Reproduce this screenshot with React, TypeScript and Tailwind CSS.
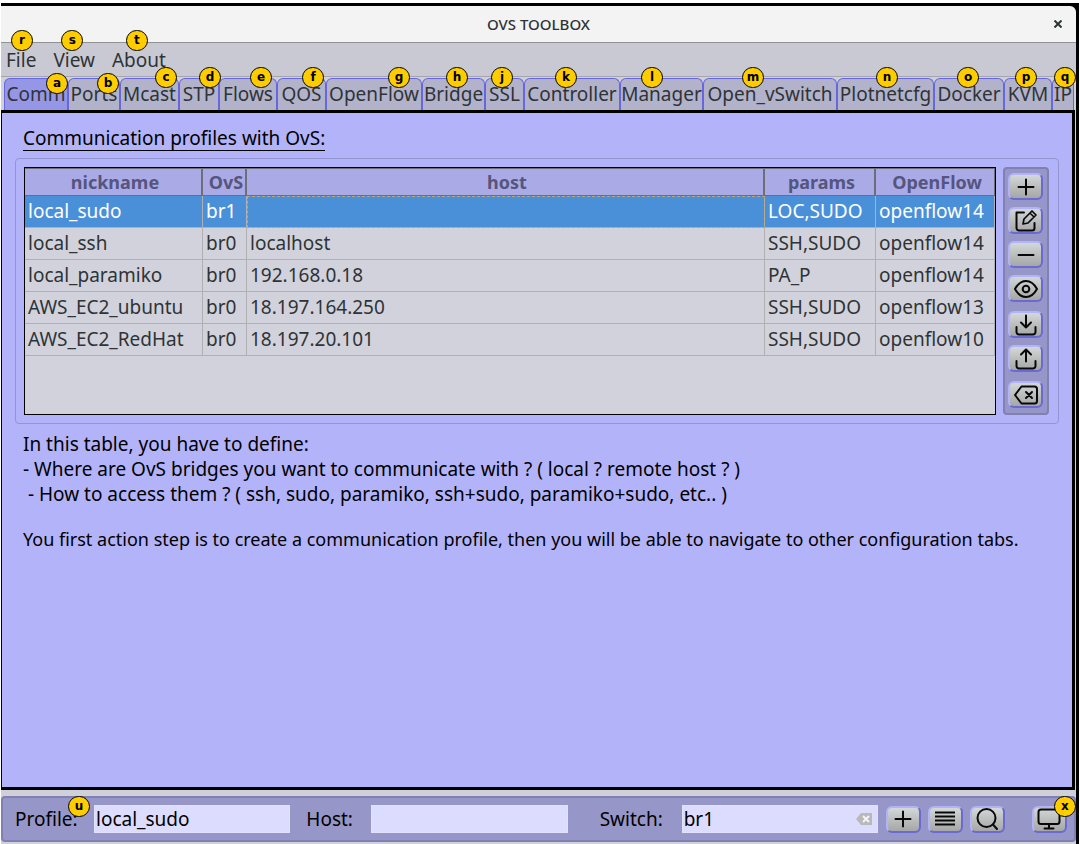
import { useState, type ReactNode } from "react";

function Badge({ label, className }: { label: string; className: string }) {
  return (
    <span
      aria-hidden="true"
      className={`pointer-events-none absolute z-10 flex h-[21px] w-[22px] items-center justify-center rounded-full border border-black bg-[#ffcc00] pb-px font-['DejaVu_Sans',sans-serif] text-xs leading-none font-bold text-black ${className}`}
    >
      {label}
    </span>
  );
}

function Icon({ children }: { children: ReactNode }) {
  return (
    <svg
      viewBox="0 0 24 24"
      className="h-6 w-6"
      fill="none"
      stroke="#080808"
      strokeWidth="2"
      strokeLinecap="round"
      strokeLinejoin="round"
      aria-hidden="true"
    >
      {children}
    </svg>
  );
}

const icons = {
  add: <path d="M4.500 12h15M12 4.500v15" />,
  edit: (
    <>
      <path d="M10 3.500H2.500v15.500A2.500 2.500 0 0 0 5 21.500h13a2.500 2.500 0 0 0 2.500-2.500v-5" />
      <path d="M9 15l1-5 8-8 4 4-8 8zM16 4l4 4" strokeWidth="1.700" />
    </>
  ),
  remove: <path d="M4.500 12h15" />,
  view: (
    <>
      <path d="M1 12c3-5.500 6.500-8 11-8s8 2.500 11 8c-3 5.500-6.500 8-11 8S4 17.500 1 12z" />
      <circle cx="12" cy="12" r="3.300" />
    </>
  ),
  download: (
    <>
      <path d="M12 2.500v12M7 9.500l5 5 5-5" />
      <path d="M2.500 14v5a2.500 2.500 0 0 0 2.500 2.500h14a2.500 2.500 0 0 0 2.500-2.500v-5" />
    </>
  ),
  upload: (
    <>
      <path d="M12 14.500v-12M7 7.500l5-5 5 5" />
      <path d="M2.500 14v5a2.500 2.500 0 0 0 2.500 2.500h14a2.500 2.500 0 0 0 2.500-2.500v-5" />
    </>
  ),
  erase: (
    <>
      <path d="M7.500 3.500h13a2.500 2.500 0 0 1 2.500 2.500v12a2.500 2.500 0 0 1-2.500 2.500h-13L1 12z" />
      <path d="M12 9l6 6M18 9l-6 6" />
    </>
  ),
  list: <path d="M2 5.500h20M2 9.500h20M2 13.500h20M2 17.500h20" strokeLinecap="butt" strokeWidth="1.800" />,
  search: (
    <>
      <circle cx="11.500" cy="11" r="9" />
      <path d="M18 17.500l4 4.500" />
    </>
  ),
  monitor: (
    <>
      <rect x="1.500" y="2.500" width="21" height="14.500" rx="2.500" />
      <path d="M12 17v4M7.500 21.500h9" />
    </>
  ),
};

function IconButton({ label, icon }: { label: string; icon: ReactNode }) {
  return (
    <button
      type="button"
      aria-label={label}
      className="flex h-[27px] w-[35px] shrink-0 items-center justify-center rounded-md border-2 border-t-[#b3b3fa] border-r-[#6a6ad2] border-b-[#6a6ad2] border-l-[#b3b3fa] bg-linear-to-b from-[#d3d8d8] to-[#a6a6a6]"
    >
      <Icon>{icon}</Icon>
    </button>
  );
}

const menus = [
  { name: "File", key: "r", at: "left-[5px]" },
  { name: "View", key: "s", at: "left-[8px]" },
  { name: "About", key: "t", at: "left-[14px]" },
];

const tabs = [
  { name: "Comm", key: "a", at: "top-[-6px] left-[41px]" },
  { name: "Ports", key: "b", at: "top-[-6px] left-[28px]" },
  { name: "Mcast", key: "c", at: "top-[-12px] left-[34px]" },
  { name: "STP", key: "d", at: "top-[-12px] left-[19px]" },
  { name: "Flows", key: "e", at: "top-[-12px] left-[30px]" },
  { name: "QOS", key: "f", at: "top-[-12px] left-[24px]" },
  { name: "OpenFlow", key: "g", at: "top-[-12px] left-[61px]" },
  { name: "Bridge", key: "h", at: "top-[-12px] left-[23px]" },
  { name: "SSL", key: "j", at: "top-[-12px] left-[5px]" },
  { name: "Controller", key: "k", at: "top-[-12px] left-[30px]" },
  { name: "Manager", key: "l", at: "top-[-12px] left-[20px]" },
  { name: "Open_vSwitch", key: "m", at: "top-[-12px] left-[38px]" },
  { name: "Plotnetcfg", key: "n", at: "top-[-12px] left-[38px]" },
  { name: "Docker", key: "o", at: "top-[-12px] left-[22px]" },
  { name: "KVM", key: "p", at: "top-[-12px] left-[10px]" },
  { name: "IP", key: "q", at: "top-[-12px] left-[1px]" },
];

const profiles = [
  ["local_sudo", "br1", "", "LOC,SUDO", "openflow14"],
  ["local_ssh", "br0", "localhost", "SSH,SUDO", "openflow14"],
  ["local_paramiko", "br0", "192.168.0.18", "PA_P", "openflow14"],
  ["AWS_EC2_ubuntu", "br0", "18.197.164.250", "SSH,SUDO", "openflow13"],
  ["AWS_EC2_RedHat", "br0", "18.197.20.101", "SSH,SUDO", "openflow10"],
];

const field =
  "h-7 w-full min-w-0 border border-[#e2e2ff] bg-[#dcdcff] px-px text-black outline-none";

export default function App() {
  const [active, setActive] = useState("Comm");
  const [selected, setSelected] = useState(0);
  const [profile, setProfile] = useState("local_sudo");
  const [host, setHost] = useState("");
  const [bridge, setBridge] = useState("br1");

  return (
    <div className="min-h-screen bg-white pt-[3px] pr-px pl-px font-['Noto_Sans',sans-serif] text-[19px] leading-[25px] text-[#2e3436]">
      <div className="flex min-h-[841px] flex-col border-t-[3px] border-r-[3px] border-black bg-[#d0d0da]">
        <div className="bg-black">
          <header className="grid h-[37px] grid-cols-[1fr_auto_1fr] items-center rounded-tr-md border-b border-[#929292] bg-[#f3f3f3]">
            <h1 className="col-start-2 text-[15px] font-medium">OVS TOOLBOX</h1>
            <button type="button" aria-label="Close" className="mr-3.5 justify-self-end">
              <svg viewBox="0 0 8 8" className="h-2 w-2" stroke="#2e3436" strokeWidth="2" aria-hidden="true">
                <path d="M.5.5l7 7M7.500.5l-7 7" />
              </svg>
            </button>
          </header>
        </div>

        <nav className="flex h-[34px] items-center gap-[17px] border-b border-[#a5a5b0] bg-[#c9c9d4] pt-px pl-[5px]">
          {menus.map((m) => (
            <button key={m.name} type="button" className="relative">
              {m.name}
              <Badge label={m.key} className={`top-[-18px] ${m.at}`} />
            </button>
          ))}
        </nav>

        <div
          role="tablist"
          className="mt-px mr-0.5 ml-[3px] grid h-8 grid-cols-[64fr_52fr_59fr_40fr_58fr_49fr_96fr_63fr_39fr_96fr_83fr_134fr_97fr_70fr_48fr_22fr]"
        >
          {tabs.map((t) => (
            <button
              key={t.name}
              type="button"
              role="tab"
              aria-selected={active === t.name}
              onClick={() => setActive(t.name)}
              className={`relative flex min-w-0 items-center justify-center rounded-t-md border border-b-0 border-[#6666e0] whitespace-nowrap ${
                active === t.name ? "bg-[#9696e6]" : "bg-[#b2b2ca]"
              }`}
            >
              {t.name}
              <Badge label={t.key} className={t.at} />
            </button>
          ))}
        </div>

        <main className="mr-px flex grow flex-col border-[3px] border-l border-black bg-[#b3b3fa] pt-[13px] pr-[13px] pl-[13px] text-black">
          <h2 className="mb-[7px] ml-2 self-start border-b border-black leading-6">Communication profiles with OvS:</h2>

          <section className="flex gap-[7px] rounded border border-[#9494d2] p-2 pr-[9px]">
            <div className="h-[248px] min-w-0 grow border border-black bg-[#d2d2dc]">
              <table className="w-full table-fixed border-separate border-spacing-0 text-[#2e3436]">
                <colgroup>
                  <col className="w-[178px]" />
                  <col className="w-11" />
                  <col />
                  <col className="w-[111px]" />
                  <col className="w-[119px]" />
                </colgroup>
                <thead>
                  <tr className="h-7 bg-[#aaaae6] text-lg text-[#55557d]">
                    {["nickname", "OvS", "host", "params", "OpenFlow"].map((h) => (
                      <th
                        key={h}
                        scope="col"
                        className="border-t border-r-2 border-b border-[#6e6e78] p-0 pl-1 text-center leading-[25px] font-bold last:border-r"
                      >
                        {h}
                      </th>
                    ))}
                  </tr>
                </thead>
                <tbody>
                  {profiles.map((row, r) => (
                    <tr
                      key={row[0]}
                      onClick={() => setSelected(r)}
                      aria-selected={selected === r}
                      className={`h-8 ${selected === r ? "bg-[#4a90d9] text-white" : ""}`}
                    >
                      {row.map((cell, c) => (
                        <td
                          key={c}
                          className={`overflow-hidden border-r border-b border-[#b0b0b2] p-0 pl-[3px] whitespace-nowrap ${
                            selected === r && c === 2 ? "outline-1 -outline-offset-1 outline-[#b9a77c] outline-dashed" : ""
                          }`}
                        >
                          {cell}
                        </td>
                      ))}
                    </tr>
                  ))}
                </tbody>
              </table>
            </div>

            <div className="flex flex-col items-center gap-[9px] rounded-sm border-2 border-[#8080b2] bg-[#9696c8] pt-1 pr-1 pb-[3px] pl-[3px]">
              <div className="flex flex-col gap-[7px]">
                <IconButton label="Add profile" icon={icons.add} />
                <IconButton label="Edit profile" icon={icons.edit} />
                <IconButton label="Remove profile" icon={icons.remove} />
                <IconButton label="View profile" icon={icons.view} />
              </div>
              <div className="flex flex-col gap-[7px]">
                <IconButton label="Load profiles" icon={icons.download} />
                <IconButton label="Save profiles" icon={icons.upload} />
              </div>
              <IconButton label="Clear profiles" icon={icons.erase} />
            </div>
          </section>

          <div className="mt-2 ml-2 flex flex-col gap-5">
            <div className="whitespace-pre-wrap">
              <p>In this table, you have to define:</p>
              <p>- Where are OvS bridges you want to communicate with ? ( local ? remote host ? )</p>
              <p>{" - How to access them ? ( ssh, sudo, paramiko, ssh+sudo, paramiko+sudo, etc.. )"}</p>
            </div>
            <p className="text-lg leading-[25px] whitespace-nowrap">
              You first action step is to create a communication profile, then you will be able to navigate to other
              configuration tabs.
            </p>
          </div>
        </main>

        <footer className="relative mt-1.5 mb-0.5 flex h-[46px] items-center rounded-sm border-2 border-[#8080b2] bg-[#9696c8] pr-[7px] pl-3 text-black">
          <label htmlFor="profile" className="relative w-[79px] shrink-0">
            Profile:
            <Badge label="u" className="top-[-11px] left-[53px]" />
          </label>
          <div className="flex min-w-0 flex-1">
            <input id="profile" className={field} value={profile} onChange={(e) => setProfile(e.target.value)} />
          </div>
          <label htmlFor="host" className="ml-4 w-[65px] shrink-0">
            Host:
          </label>
          <div className="flex min-w-0 flex-1">
            <input id="host" className={field} value={host} onChange={(e) => setHost(e.target.value)} />
          </div>
          <label htmlFor="switch" className="ml-8 w-[82px] shrink-0">
            Switch:
          </label>
          <div className="relative flex min-w-0 flex-1">
            <input id="switch" className={field} value={bridge} onChange={(e) => setBridge(e.target.value)} />
            <button
              type="button"
              aria-label="Clear switch"
              onClick={() => setBridge("")}
              className="absolute top-2 right-1.5"
            >
              <svg viewBox="0 0 16 12" className="h-3 w-4" aria-hidden="true">
                <path d="M5 0h11v12H5L0 6z" fill="#b9bab8" />
                <path d="M7 3l6 6M13 3L7 9" stroke="#f4f4fa" strokeWidth="2" />
              </svg>
            </button>
          </div>
          <div className="mr-[27px] ml-2 flex gap-[7px]">
            <IconButton label="Add" icon={icons.add} />
            <IconButton label="List" icon={icons.list} />
            <IconButton label="Search" icon={icons.search} />
          </div>
          <div className="relative">
            <IconButton label="Display" icon={icons.monitor} />
            <Badge label="x" className="top-[-10px] right-[-9px]" />
          </div>
        </footer>
      </div>
    </div>
  );
}
